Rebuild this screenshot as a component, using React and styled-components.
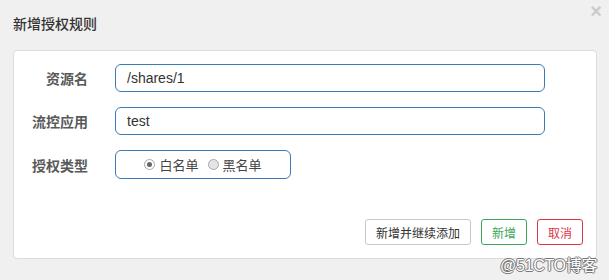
import React, { useState } from "react";
import styled, { createGlobalStyle } from "styled-components";

const GlobalStyle = createGlobalStyle`
  html, body {
    margin: 0;
    padding: 0;
    background: #f0f0f0;
  }
  body {
    font-family: "Liberation Sans", "Noto Sans CJK SC", sans-serif;
    color: #333;
  }
`;

const Page = styled.div`
  position: relative;
  width: 609px;
  height: 280px;
  box-sizing: border-box;
  padding: 0 12px 0 13px;
  overflow: hidden;
`;

const Header = styled.div`
  display: flex;
  justify-content: space-between;
  align-items: flex-start;
  height: 50px;
`;

const Title = styled.h4`
  margin: 15px 0 0;
  font-size: 14px;
  line-height: 16px;
  font-weight: 500;
  color: #333;
  font-family: "Noto Sans CJK SC", sans-serif;
`;

const Close = styled.button`
  margin: 2px -5px 0 0;
  padding: 0;
  border: none;
  background: transparent;
  font-family: "Liberation Sans", sans-serif;
  font-size: 20px;
  line-height: 18px;
  font-weight: 700;
  color: #cacaca;
  cursor: pointer;
`;

const Card = styled.div`
  width: 584px;
  height: 209px;
  box-sizing: border-box;
  background: #fff;
  border: 1px solid #dcdcdc;
  border-radius: 4px;
  padding: 13px 13px;
  display: flex;
  flex-direction: column;
`;

const Form = styled.div`
  display: flex;
  flex-direction: column;
  gap: 15px;
`;

const Row = styled.div`
  display: grid;
  grid-template-columns: 61px auto;
  column-gap: 27px;
  align-items: center;
`;

const Label = styled.label`
  text-align: right;
  font-family: "Noto Sans CJK SC", sans-serif;
  font-size: 14px;
  font-weight: 700;
  color: #5a5a5a;
`;

const Input = styled.input`
  width: 430px;
  height: 28px;
  box-sizing: border-box;
  border: 1px solid #3a7bb6;
  border-radius: 6px;
  padding: 0 11px;
  font-family: "Liberation Sans", "Noto Sans CJK SC", sans-serif;
  font-size: 14px;
  color: #333;
  outline: none;
`;

const RadioBox = styled.div`
  width: 176px;
  height: 29px;
  box-sizing: border-box;
  border: 1px solid #3a7bb6;
  border-radius: 6px;
  display: flex;
  align-items: center;
  justify-content: center;
  gap: 9px;
`;

const Option = styled.label`
  display: flex;
  align-items: center;
  gap: 4px;
  font-family: "Noto Sans CJK SC", sans-serif;
  font-size: 13px;
  color: #444;
  cursor: pointer;
`;

const Dot = styled.span`
  width: 11px;
  height: 11px;
  box-sizing: border-box;
  border-radius: 50%;
  border: 1px solid #a8a8a8;
  background: ${(p) => (p.$checked ? "#fff" : "#e4e4e4")};
  display: flex;
  align-items: center;
  justify-content: center;

  &::after {
    content: "";
    width: 5px;
    height: 5px;
    border-radius: 50%;
    background: #666;
    display: ${(p) => (p.$checked ? "block" : "none")};
  }
`;

const Divider = styled.div`
  height: 1px;
  background: #e2e2e2;
  margin-top: 22px;
`;

const Footer = styled.div`
  display: flex;
  justify-content: flex-end;
  gap: 10px;
  margin-top: 18px;
`;

const tones = {
  default: { border: "#c8c8c8", color: "#333" },
  success: { border: "#3aa857", color: "#3aa857" },
  danger: { border: "#dc3545", color: "#dc3545" },
};

const Button = styled.button`
  height: 26px;
  box-sizing: border-box;
  padding: 0 10px;
  background: #fff;
  border: 1px solid ${(p) => tones[p.$tone].border};
  color: ${(p) => tones[p.$tone].color};
  border-radius: 3px;
  font-family: "Noto Sans CJK SC", sans-serif;
  font-size: 12px;
  cursor: pointer;
`;

const Watermark = styled.div`
  position: absolute;
  left: 500px;
  top: 252px;
  font-family: "Liberation Sans", "Noto Sans CJK SC", sans-serif;
  font-size: 16px;
  letter-spacing: -0.3px;
  color: #fff;
  text-shadow: 1px 0 0 #777, -1px 0 0 #777, 0 1px 0 #777, 0 -1px 0 #777;
  pointer-events: none;
`;

export default function App() {
  const [type, setType] = useState("white");
  const [resource, setResource] = useState("/shares/1");
  const [app, setApp] = useState("test");

  return (
    <>
      <GlobalStyle />
      <Page>
        <Header>
          <Title>新增授权规则</Title>
          <Close>×</Close>
        </Header>
        <Card>
          <Form>
            <Row>
              <Label>资源名</Label>
              <Input value={resource} onChange={(e) => setResource(e.target.value)} />
            </Row>
            <Row>
              <Label>流控应用</Label>
              <Input value={app} onChange={(e) => setApp(e.target.value)} />
            </Row>
            <Row>
              <Label>授权类型</Label>
              <RadioBox>
                <Option onClick={() => setType("white")}>
                  <Dot $checked={type === "white"} />
                  白名单
                </Option>
                <Option onClick={() => setType("black")}>
                  <Dot $checked={type === "black"} />
                  黑名单
                </Option>
              </RadioBox>
            </Row>
          </Form>
          <Divider />
          <Footer>
            <Button $tone="default">新增并继续添加</Button>
            <Button $tone="success">新增</Button>
            <Button $tone="danger">取消</Button>
          </Footer>
        </Card>
        <Watermark>@51CTO博客</Watermark>
      </Page>
    </>
  );
}
